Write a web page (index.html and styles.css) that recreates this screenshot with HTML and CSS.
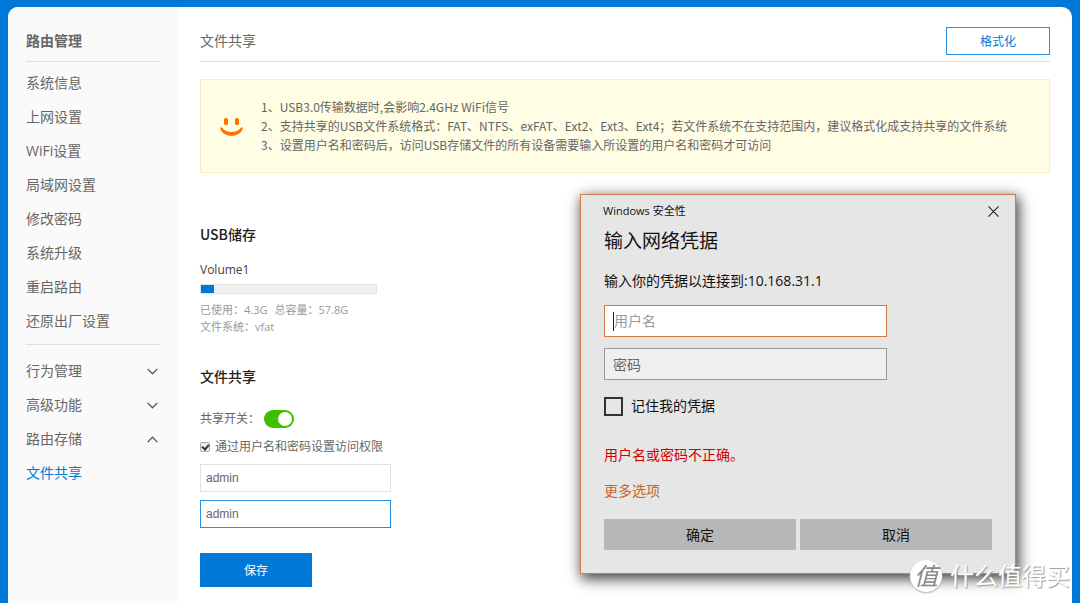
FILE: index.html
```html
<!DOCTYPE html>
<html lang="zh-CN">
<head>
<meta charset="utf-8">
<title>文件共享</title>
<link rel="stylesheet" href="styles.css">
</head>
<body>
<div class="panel">
  <nav class="sidebar">
    <h1 class="sidebar-title">路由管理</h1>
    <ul class="menu">
      <li><a href="#">系统信息</a></li>
      <li><a href="#">上网设置</a></li>
      <li><a href="#">WiFi设置</a></li>
      <li><a href="#">局域网设置</a></li>
      <li><a href="#">修改密码</a></li>
      <li><a href="#">系统升级</a></li>
      <li><a href="#">重启路由</a></li>
      <li><a href="#">还原出厂设置</a></li>
    </ul>
    <ul class="menu menu-groups">
      <li><a href="#">行为管理<svg class="chevron" viewBox="0 0 10 6"><path d="M.6.6 5 5 9.400.6"/></svg></a></li>
      <li><a href="#">高级功能<svg class="chevron" viewBox="0 0 10 6"><path d="M.6.6 5 5 9.400.6"/></svg></a></li>
      <li><a href="#">路由存储<svg class="chevron" viewBox="0 0 10 6"><path d="M.6 5.400 5 1 9.400 5.400"/></svg></a></li>
      <li><a href="#" class="active">文件共享</a></li>
    </ul>
  </nav>
  <main class="content">
    <header class="content-header">
      <h2 class="page-title">文件共享</h2>
      <button type="button" class="format-button">格式化</button>
    </header>
    <section class="notice">
      <svg class="smile" viewBox="0 0 24 20"><rect x="5" y="2" width="4" height="7" rx="1.500"/><rect x="16" y="2" width="4" height="7" rx="1.500"/><path d="M1 11.500H3C7 17.500 18 17.500 22 11.500H24C23 17 18 19.800 12.500 19.800S2 17 1 11.500Z"/></svg>
      <div class="notice-text">
        <p>1、USB3.0传输数据时,会影响2.4GHz WiFi信号</p>
        <p>2、支持共享的USB文件系统格式：FAT、NTFS、exFAT、Ext2、Ext3、Ext4；若文件系统不在支持范围内，建议格式化成支持共享的文件系统</p>
        <p>3、设置用户名和密码后，访问USB存储文件的所有设备需要输入所设置的用户名和密码才可访问</p>
      </div>
    </section>
    <section class="storage">
      <h3 class="section-title">USB储存</h3>
      <p class="volume">Volume1</p>
      <div class="usage"><div class="usage-fill" style="width: 7.400%"></div></div>
      <div class="stats">
        <p><span>已使用：</span><span>4.3G</span><span>总容量：</span><span>57.8G</span></p>
        <p><span>文件系统：</span><span>vfat</span></p>
      </div>
    </section>
    <form class="share">
      <h3 class="section-title">文件共享</h3>
      <label class="switch-row">共享开关：<input type="checkbox" class="switch" checked></label>
      <label class="auth-row"><input type="checkbox" class="tick" checked>通过用户名和密码设置访问权限</label>
      <input type="text" class="field" value="admin" aria-label="用户名">
      <input type="text" class="field field-focus" value="admin" aria-label="密码">
      <button type="button" class="save-button">保存</button>
    </form>
  </main>
</div>

<div class="dialog" role="dialog" aria-labelledby="dialog-title">
  <div class="dialog-bar">
    <span>Windows 安全性</span>
    <button type="button" class="close-button" aria-label="关闭"><svg viewBox="0 0 10 10"><path d="M.4.4 9.600 9.600M9.600.4.4 9.600"/></svg></button>
  </div>
  <h2 class="dialog-title" id="dialog-title">输入网络凭据</h2>
  <p class="dialog-message">输入你的凭据以连接到:10.168.31.1</p>
  <div class="username-box"><span class="caret"></span><input type="text" placeholder="用户名" aria-label="用户名"></div>
  <input type="password" class="password-box" placeholder="密码" aria-label="密码">
  <label class="remember"><input type="checkbox">记住我的凭据</label>
  <p class="error">用户名或密码不正确。</p>
  <a href="#" class="more">更多选项</a>
  <div class="dialog-buttons">
    <button type="button">确定</button>
    <button type="button">取消</button>
  </div>
</div>

<div class="watermark"><span class="watermark-badge">值</span><span>什么值得买</span></div>
</body>
</html>
```

FILE: styles.css
```css
* {
  box-sizing: border-box;
}

body {
  margin: 0;
  position: relative;
  min-height: 100vh;
  overflow: hidden;
  padding: 7px 8px 0;
  background: #0078d7;
  color: #666;
  font: 12px/18px "Open Sans", "Noto Sans CJK SC", sans-serif;
}

h1, h2, h3, p, ul {
  margin: 0;
  padding: 0;
  font-weight: 400;
}

ul {
  list-style: none;
}

a {
  color: inherit;
  text-decoration: none;
}

button, input {
  font: inherit;
  color: inherit;
  border-radius: 0;
  margin: 0;
}

.panel {
  display: flex;
  min-height: calc(100vh - 7px);
  background: #fff;
  border-radius: 10px 10px 0 0;
  overflow: hidden;
}

.sidebar {
  flex: 0 0 171px;
  padding: 17px 19px 0 18px;
  background: #fafafa;
  font-size: 14px;
  line-height: 34px;
}

.sidebar-title {
  padding-bottom: 3px;
  border-bottom: 1px solid #e0e0e0;
  font-size: 14px;
  font-weight: 700;
  color: #666;
}

.menu {
  padding-top: 4px;
}

.menu a {
  display: flex;
  align-items: center;
  justify-content: space-between;
  padding-right: 2px;
}

.menu-groups {
  margin-top: 6px;
  padding-top: 9px;
  border-top: 1px solid #e0e0e0;
}

.menu .active {
  color: #0078d7;
}

.chevron {
  width: 11px;
  height: 7px;
  fill: none;
  stroke: #555;
  stroke-width: 1.2;
}

.content {
  flex: 1;
  min-width: 0;
  padding: 20px 22px 15px 21px;
}

.content-header {
  display: flex;
  align-items: center;
  justify-content: space-between;
  padding-bottom: 6px;
  border-bottom: 1px solid #e0e0e0;
}

.page-title {
  font-size: 14px;
}

.format-button {
  width: 104px;
  height: 28px;
  padding: 2px 0 0;
  border: 1px solid #2a8ddd;
  background: #fff;
  color: #0078d7;
}

.notice {
  display: flex;
  align-items: center;
  gap: 18px;
  margin-top: 17px;
  padding: 17px 18px 18px;
  border: 1px solid #faecc8;
  background: #fffde3;
  font-family: "Noto Sans CJK SC", sans-serif;
  line-height: 19px;
}

.smile {
  flex: none;
  width: 24px;
  height: 20px;
  fill: #ff7300;
}

.storage {
  margin-top: 51px;
}

.section-title {
  font-family: "Noto Sans CJK SC", sans-serif;
  font-size: 14px;
  font-weight: 500;
  line-height: 20px;
  color: #222;
}

.volume {
  margin-top: 17px;
  color: #444;
}

.usage {
  width: 177px;
  height: 10px;
  margin-top: 5px;
  border: 1px solid #e3e3e3;
  background: #f0f0f0;
}

.usage-fill {
  height: 100%;
  background: #0078d7;
}

.stats {
  margin-top: 7px;
  font-size: 11px;
  line-height: 17px;
  color: #999;
}

.stats p {
  display: flex;
}

.stats span:nth-child(even) {
  margin-right: 7px;
}

.share {
  display: flex;
  flex-direction: column;
  align-items: flex-start;
  margin-top: 31px;
}

.switch-row {
  display: flex;
  align-items: center;
  margin-top: 24px;
  gap: 4px;
}

.switch {
  appearance: none;
  display: flex;
  justify-content: flex-end;
  width: 30px;
  height: 18px;
  padding: 2px;
  border-radius: 9px;
  background: #3fbf00;
}

.switch::before {
  content: "";
  width: 14px;
  height: 14px;
  border-radius: 50%;
  background: #fff;
}

.auth-row {
  display: flex;
  align-items: center;
  gap: 5px;
  margin-top: 10px;
}

.tick {
  appearance: none;
  display: grid;
  place-items: start center;
  width: 10px;
  height: 10px;
  border: 1px solid #aaa;
  border-radius: 2px;
  background: #eee;
}

.tick:checked::before {
  content: "";
  box-sizing: border-box;
  width: 5px;
  height: 7px;
  border: solid #333;
  border-width: 0 2px 2px 0;
  transform: rotate(40deg);
}

.field {
  width: 191px;
  height: 28px;
  margin-top: 8px;
  padding: 0 5px;
  border: 1px solid #e0e0e0;
  background: #fff;
  font-family: "Liberation Sans", Arial, sans-serif;
  outline: 0;
}

.field-focus {
  border-color: #2a8ddd;
}

.save-button {
  width: 112px;
  height: 34px;
  margin-top: 25px;
  padding: 2px 0 0;
  border: 0;
  background: #0078d7;
  color: #fff;
}

.dialog {
  position: absolute;
  top: 194px;
  right: 64px;
  display: flex;
  flex-direction: column;
  width: 436px;
  padding: 0 23px 23px;
  border: 1px solid #d27a45;
  background: #e6e6e6;
  box-shadow: 2px 4px 13px 1px rgba(0, 0, 0, 0.75);
  color: #111;
  font-size: 14px;
  line-height: 20px;
}

.dialog-bar {
  display: flex;
  align-items: center;
  justify-content: space-between;
  height: 32px;
  margin-left: -1px;
  font-size: 11px;
}

.close-button {
  display: flex;
  align-items: center;
  justify-content: center;
  width: 20px;
  height: 20px;
  margin-right: -11px;
  padding: 0;
  border: 0;
  background: none;
}

.close-button svg {
  width: 11px;
  height: 11px;
  fill: none;
  stroke: #222;
}

.dialog-title {
  font-size: 19px;
  line-height: 28px;
}

.dialog-message {
  margin-top: 16px;
}

.username-box, .password-box {
  width: 283px;
  height: 32px;
  padding: 0 8px;
  border: 1px solid #999;
  background: #efefef;
  outline: 0;
}

.username-box {
  display: flex;
  align-items: center;
  margin-top: 14px;
  border-color: #d27a45;
  background: #fff;
}

.username-box input {
  flex: 1;
  min-width: 0;
  padding: 0;
  border: 0;
  outline: 0;
  background: none;
}

.caret {
  width: 1px;
  height: 19px;
  background: #222;
}

.username-box input::placeholder {
  color: #999;
}

.password-box {
  margin-top: 11px;
}

.password-box::placeholder {
  color: #666;
}

.remember {
  display: flex;
  align-items: center;
  align-self: flex-start;
  gap: 8px;
  margin-top: 16px;
}

.remember input {
  appearance: none;
  width: 19px;
  height: 19px;
  border: 2px solid #333;
}

.error {
  margin-top: 29px;
  color: #d00000;
}

.more {
  align-self: flex-start;
  margin-top: 16px;
  color: #ca6528;
}

.dialog-buttons {
  display: grid;
  grid-template-columns: 1fr 1fr;
  gap: 4px;
  margin-top: 18px;
}

.dialog-buttons button {
  height: 31px;
  padding: 0;
  border: 0;
  background: #b7b7b7;
}

.watermark {
  position: absolute;
  right: 10px;
  bottom: 11px;
  display: flex;
  align-items: center;
  gap: 8px;
  color: #fff;
  font-size: 24px;
  line-height: 32px;
  text-shadow: 1px 1px 1px #999;
}

.watermark-badge {
  width: 32px;
  height: 32px;
  border-radius: 50%;
  background: #fff;
  box-shadow: 0 1px 2px #aaa;
  color: #888;
  text-align: center;
  text-shadow: none;
  font-style: italic;
}
```
